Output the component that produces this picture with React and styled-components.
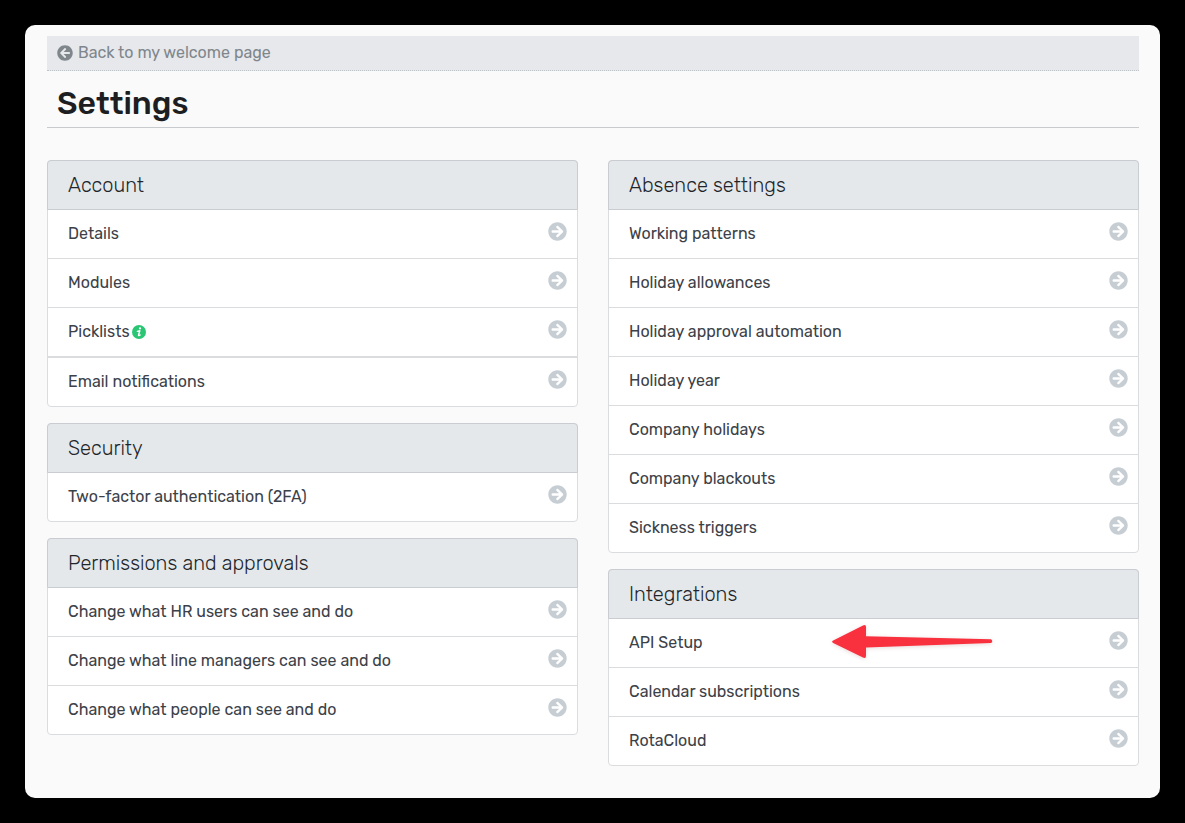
import React from "react";
import styled, { createGlobalStyle } from "styled-components";
import { FaArrowCircleLeft, FaArrowCircleRight } from "react-icons/fa";

const GlobalStyle = createGlobalStyle`
  *, *::before, *::after { box-sizing: border-box; }
  body {
    margin: 0;
    background: #000;
    color: #212529;
    font-family: Rubik, Roboto, "Liberation Sans", sans-serif;
    font-size: 16px;
    line-height: 24px;
  }
`;

const Page = styled.div`
  padding: 25px;
`;

const Frame = styled.main`
  padding: 11px 21px 32px 22px;
  background: #fafafa;
  border-radius: 10px;
`;

const BackLink = styled.a`
  display: flex;
  align-items: center;
  gap: 5px;
  height: 35px;
  padding: 0 10px;
  background: #e6e8eb;
  border-bottom: 1px dotted #bfc4c8;
  color: #7f868c;
  font-size: 16px;
  font-weight: 400;
  text-decoration: none;
`;

const Title = styled.h1`
  margin: 0 0 32px;
  padding: 12px 10px 4px;
  border-bottom: 1px solid #c8cbce;
  color: #1c1e21;
  font-size: 32px;
  line-height: 40px;
  font-weight: 500;
`;

const Columns = styled.div`
  display: grid;
  grid-template-columns: 1fr 1fr;
  gap: 30px;
`;

const Column = styled.div`
  display: flex;
  flex-direction: column;
  gap: 16px;
`;

const Panel = styled.section`
  background: #fff;
  border: 1px solid #dbdcde;
  border-radius: 4px;
`;

const PanelTitle = styled.h2`
  margin: -1px -1px 0;
  padding: 12px 20px;
  background: #e4e8eb;
  border: 1px solid #c9ccd0;
  border-radius: 4px 4px 0 0;
  color: #212529;
  font-size: 20px;
  line-height: 24px;
  font-weight: 300;
`;

const List = styled.ul`
  margin: 0;
  padding: 0;
  list-style: none;
`;

const Item = styled.li`
  position: relative;
  border-bottom: ${(p) => (p.$divided ? 2 : 1)}px solid #dbdcde;

  &:last-child { border-bottom: 0; }
`;

const ItemLink = styled.a`
  display: flex;
  align-items: center;
  height: 48px;
  padding: 0 10px 0 20px;
  color: #3c4148;
  font-weight: 400;
  text-decoration: none;
`;

const Go = styled(FaArrowCircleRight)`
  width: 19px;
  height: 19px;
  margin: 0 0 5px auto;
  color: #c6ced4;
`;

const Info = styled.svg`
  width: 14px;
  height: 14px;
  margin-left: 2px;
`;

const Pointer = styled.svg`
  position: absolute;
  top: 4px;
  left: 221px;
  width: 164px;
  height: 40px;
  overflow: visible;
  pointer-events: none;
  filter: drop-shadow(0 1px 2px rgba(90, 0, 0, 0.15));
`;

const left = [
  {
    title: "Account",
    items: [
      { label: "Details" },
      { label: "Modules" },
      { label: "Picklists", info: true, divided: true },
      { label: "Email notifications" },
    ],
  },
  { title: "Security", items: [{ label: "Two-factor authentication (2FA)" }] },
  {
    title: "Permissions and approvals",
    items: [
      { label: "Change what HR users can see and do" },
      { label: "Change what line managers can see and do" },
      { label: "Change what people can see and do" },
    ],
  },
];

const right = [
  {
    title: "Absence settings",
    items: [
      { label: "Working patterns" },
      { label: "Holiday allowances" },
      { label: "Holiday approval automation" },
      { label: "Holiday year" },
      { label: "Company holidays" },
      { label: "Company blackouts" },
      { label: "Sickness triggers" },
    ],
  },
  {
    title: "Integrations",
    items: [
      { label: "API Setup", pointer: true },
      { label: "Calendar subscriptions" },
      { label: "RotaCloud" },
    ],
  },
];

function InfoIcon() {
  return (
    <Info viewBox="0 0 14 14" role="img" aria-label="More information">
      <circle cx="7" cy="7" r="7" fill="#2bc673" />
      <circle cx="8" cy="3.4" r="1.1" fill="#fff" />
      <path
        d="M5.4 6.4L7.8 5.7L6.5 10.2Q6.4 11 8.2 10"
        fill="none"
        stroke="#fff"
        strokeWidth="1.4"
        strokeLinecap="round"
        strokeLinejoin="round"
      />
    </Info>
  );
}

function PointerArrow() {
  return (
    <Pointer viewBox="0 0 164 40" aria-hidden="true">
      <path
        d="M3.2 17.6L33 2.4Q36 1.2 36 4V13.2L161 16.2Q163.5 18.2 161 20.1L36 24.6V32.7Q36 35.8 33 34.5L3.2 19.9Q1 18.7 3.2 17.6Z"
        fill="#f9303d"
      />
    </Pointer>
  );
}

function SettingsColumn({ panels }) {
  return (
    <Column>
      {panels.map((panel) => (
        <Panel key={panel.title}>
          <PanelTitle>{panel.title}</PanelTitle>
          <List>
            {panel.items.map((item) => (
              <Item key={item.label} $divided={item.divided}>
                <ItemLink href="#">
                  {item.label}
                  {item.info && <InfoIcon />}
                  <Go aria-hidden="true" />
                </ItemLink>
                {item.pointer && <PointerArrow />}
              </Item>
            ))}
          </List>
        </Panel>
      ))}
    </Column>
  );
}

export default function App() {
  return (
    <Page>
      <GlobalStyle />
      <Frame>
        <BackLink href="#">
          <FaArrowCircleLeft aria-hidden="true" />
          Back to my welcome page
        </BackLink>
        <Title>Settings</Title>
        <Columns>
          <SettingsColumn panels={left} />
          <SettingsColumn panels={right} />
        </Columns>
      </Frame>
    </Page>
  );
}
